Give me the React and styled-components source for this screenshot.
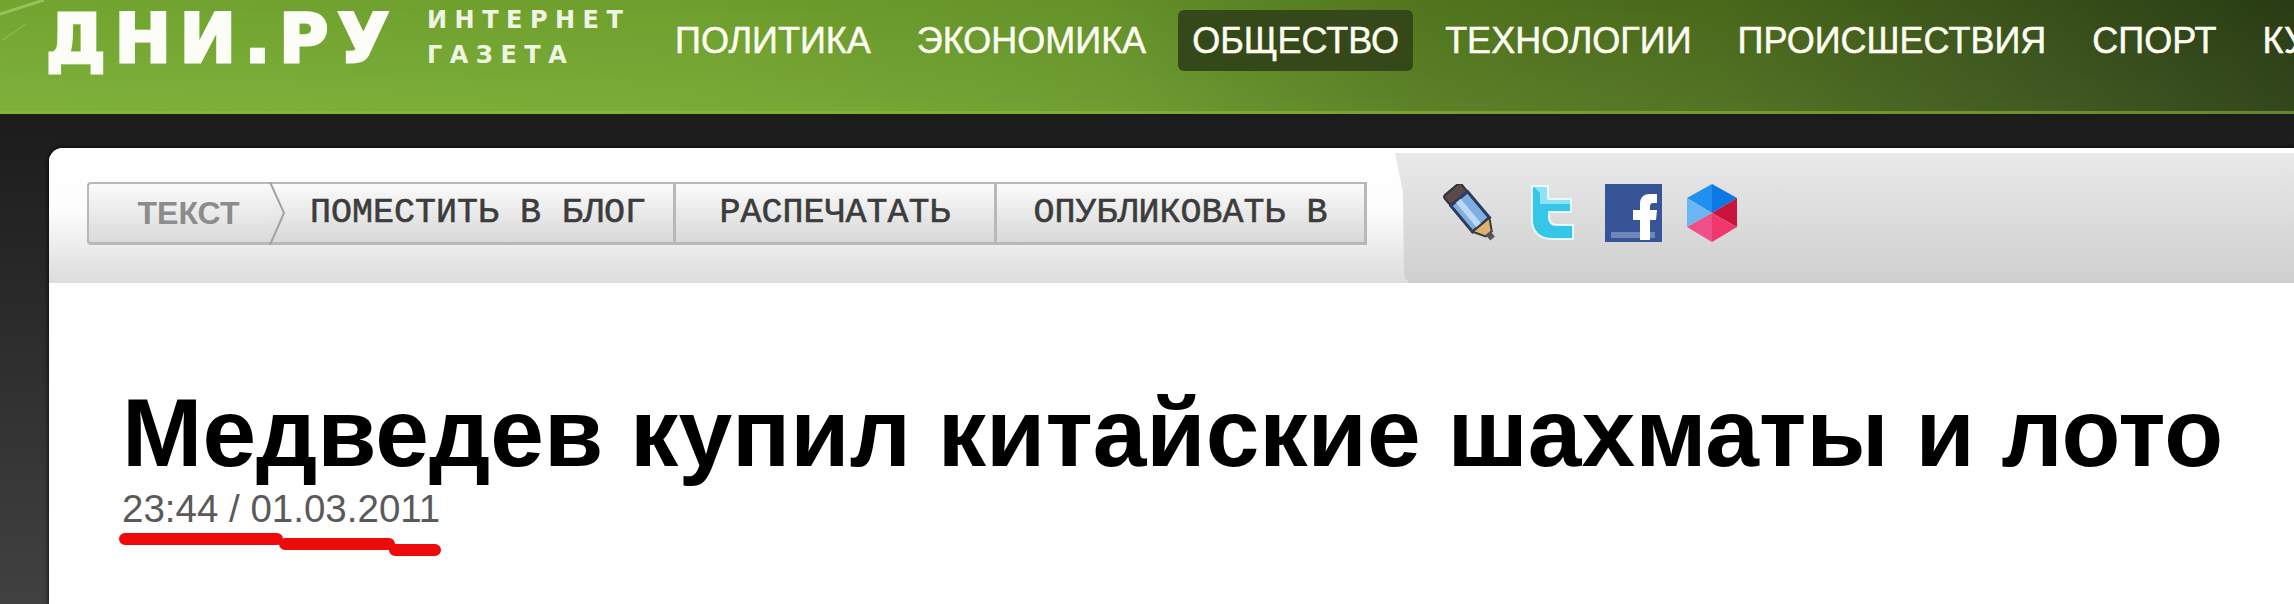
import styled, { createGlobalStyle } from "styled-components"

const GlobalStyle = createGlobalStyle`
    html, body {
        margin: 0;
        padding: 0;
        height: 100%;
        overflow: hidden;
    }
    #root {
        height: 100%;
    }
`

const navItems = ["ПОЛИТИКА", "ЭКОНОМИКА", "ОБЩЕСТВО", "ТЕХНОЛОГИИ", "ПРОИСШЕСТВИЯ", "СПОРТ", "КУЛЬТУРА"]

const actions = [
    { label: "ПОМЕСТИТЬ В БЛОГ", width: 406, indent: 13 },
    { label: "РАСПЕЧАТАТЬ", width: 321 },
    { label: "ОПУБЛИКОВАТЬ В", width: 370 },
]

export default function App () {
    return (
        <Page>
            <GlobalStyle />
            <Header>
                <Streak viewBox="0 0 60 40">
                    <path d="M0 14 L44 0" stroke="#a6cf6e" strokeWidth="3" fill="none" opacity="0.7" />
                    <path d="M0 42 L26 24" stroke="#93c155" strokeWidth="2" fill="none" opacity="0.5" />
                </Streak>
                <Logo>ДНИ.РУ</Logo>
                <Tagline>
                    <span>ИНТЕРНЕТ</span>
                    <span>ГАЗЕТА</span>
                </Tagline>
                <Nav>
                    {navItems.map(item => (
                        <NavItem key={item} $active={item === "ОБЩЕСТВО"}>{item}</NavItem>
                    ))}
                </Nav>
            </Header>
            <Main>
                <Card>
                    <Toolbar>
                        <ActionsPanel>
                            <TextTab>
                                ТЕКСТ
                                <Chevron viewBox="0 0 16 63" preserveAspectRatio="none">
                                    <path d="M1 0 L15 31 L1 63" fill="none" stroke="#a3a3a3" strokeWidth="2" />
                                </Chevron>
                            </TextTab>
                            {actions.map(action => (
                                <ActionButton key={action.label} $width={action.width} $indent={action.indent}>
                                    {action.label}
                                </ActionButton>
                            ))}
                        </ActionsPanel>
                        <SocialPanel>
                            <PencilIcon />
                            <TwitterIcon />
                            <FacebookIcon />
                            <HexIcon />
                        </SocialPanel>
                    </Toolbar>
                    <Article>
                        <Title>Медведев купил китайские шахматы и лото</Title>
                        <DateLine>23:44 / 01.03.2011</DateLine>
                        <Underline viewBox="0 0 322 26">
                            <path d="M6 7 H158 M166 12 H270 M276 18 H316" fill="none" stroke="#ee0a0a" strokeWidth="12" strokeLinecap="round" />
                        </Underline>
                    </Article>
                </Card>
            </Main>
        </Page>
    )
}

function PencilIcon () {
    return (
        <svg width="60" height="60" viewBox="0 0 60 60">
            <g transform="rotate(-40 30 30)">
                <rect x="19" y="-2" width="22" height="12" rx="3" fill="#5c4a4a" stroke="#333" strokeWidth="2" />
                <rect x="19" y="10" width="22" height="34" fill="#7faee0" stroke="#2b3c5c" strokeWidth="3" />
                <rect x="25" y="11" width="6" height="32" fill="#bcd8f4" />
                <path d="M19 44 H41 L34 56 H26 Z" fill="#e0b070" stroke="#3a3a3a" strokeWidth="2" />
                <rect x="27" y="55" width="6" height="7" fill="#555" />
            </g>
        </svg>
    )
}

function TwitterIcon () {
    return (
        <svg width="47" height="60" viewBox="0 0 47 60">
            <path d="M2 2 H18 V15 H41 V28 H19 V33 C19 39 22 41 27 41 H43 V55 H22 C9 55 2 47 2 36 Z" fill="#35c6ea" stroke="#e6fbff" strokeWidth="2" strokeLinejoin="round" />
            <path d="M4 3 H17 V16 H40 V20 H10 V9 Z" fill="#8fe2f5" />
        </svg>
    )
}

function FacebookIcon () {
    return (
        <svg width="57" height="58" viewBox="0 0 57 58">
            <rect width="57" height="58" fill="#375496" />
            <rect x="6" y="48" width="44" height="6" fill="#6f86b8" />
            <path d="M35 56 V36 H28 V26 H35 V20 C35 13 39 10 45 10 H52 V19 H48 C46 19 45 20 45 23 V26 H52 L51 36 H45 V56 Z" fill="#fff" />
        </svg>
    )
}

function HexIcon () {
    return (
        <HexSvg width="50" height="58" viewBox="0 0 50 58">
            <path d="M25 0 L25 29 L0 14 Z" fill="#1f8ff0" />
            <path d="M25 0 L50 14 L25 29 Z" fill="#0b78e6" />
            <path d="M0 14 L25 29 L0 43 Z" fill="#6bb6f2" />
            <path d="M50 14 L50 43 L25 29 Z" fill="#c8143c" />
            <path d="M0 43 L25 29 L25 58 Z" fill="#ee4f86" />
            <path d="M25 29 L50 43 L25 58 Z" fill="#f0386f" />
        </HexSvg>
    )
}

const Page = styled.div`
    display: flex;
    flex-direction: column;
    height: 100%;
    overflow: hidden;
    background: linear-gradient(180deg, #131313 0%, #1a1a1a 15%, #414141 100%);
`

const Header = styled.header`
    position: relative;
    box-sizing: border-box;
    display: flex;
    align-items: flex-start;
    flex: none;
    height: 114px;
    padding: 0 0 0 46px;
    border-bottom: 3px solid rgba(150, 200, 60, 0.55);
    overflow: hidden;
    background:
        linear-gradient(180deg, rgba(0, 0, 0, 0.06) 0%, rgba(255, 255, 255, 0.04) 100%),
        linear-gradient(90deg, #79ae33 0%, #75a830 30%, #6a9a2b 48%, #567c20 62%, #4d6e1c 75%, #39521a 90%, #2b3f14 100%);
`

const Streak = styled.svg`
    position: absolute;
    left: 0;
    top: 0;
    width: 60px;
    height: 40px;
`

const Logo = styled.div`
    flex: none;
    width: 365px;
    font-family: "DejaVu Sans", sans-serif;
    font-weight: 700;
    font-size: 67px;
    line-height: 78px;
    letter-spacing: 9px;
    -webkit-text-stroke: 3px #fbfdf6;
    color: #fbfdf6;
    white-space: nowrap;
`

const Tagline = styled.div`
    display: flex;
    flex-direction: column;
    gap: 11px;
    flex: none;
    width: 234px;
    margin: 8px 0 0 16px;
    font-family: "DejaVu Sans", sans-serif;
    font-weight: 700;
    font-size: 24px;
    line-height: 24px;
    letter-spacing: 7.5px;
    color: #eef5e0;
`

const Nav = styled.nav`
    display: flex;
    gap: 18px;
    margin: 10px 0 0 0;
    white-space: nowrap;
`

const NavItem = styled.a`
    box-sizing: border-box;
    height: 61px;
    padding: 0 14px;
    border-radius: 6px;
    font-family: "Liberation Sans", Arial, sans-serif;
    font-size: 36px;
    line-height: 61px;
    -webkit-text-stroke: 0.5px #fdfdf0;
    color: #fdfdf0;
    background: ${props => props.$active ? "#35481a" : "transparent"};
`

const Main = styled.main`
    display: flex;
    flex: 1;
    min-height: 0;
    padding: 34px 0 0 49px;
`

const Card = styled.div`
    flex: 1;
    min-width: 0;
    border-top-left-radius: 14px;
    background: #fff;
    box-shadow: 0 0 5px #000;
    overflow: hidden;
`

const Toolbar = styled.div`
    display: flex;
    height: 135px;
    background: linear-gradient(180deg, #fff 0%, #fdfdfd 45%, #dcdcdc 100%);
`

const ActionsPanel = styled.div`
    box-sizing: border-box;
    display: flex;
    flex: none;
    width: 1346px;
    height: 100px;
    padding: 34px 0 0 38px;
`

const TextTab = styled.div`
    position: relative;
    box-sizing: border-box;
    flex: none;
    width: 183px;
    height: 63px;
    padding-left: 18px;
    border: 2px solid #b8b8b8;
    border-right: none;
    border-bottom-width: 3px;
    border-radius: 4px 0 0 4px;
    background: linear-gradient(180deg, #fbfbfb 0%, #dadada 100%);
    font-family: "Liberation Sans", Arial, sans-serif;
    font-weight: 700;
    font-size: 32px;
    line-height: 58px;
    text-align: center;
    color: #8c8c8c;
`

const Chevron = styled.svg`
    position: absolute;
    z-index: 1;
    right: -15px;
    top: -2px;
    width: 16px;
    height: 63px;
`

const ActionButton = styled.div`
    box-sizing: border-box;
    flex: none;
    width: ${props => props.$width}px;
    height: 63px;
    padding-left: ${props => props.$indent || 0}px;
    border: 2px solid #b8b8b8;
    border-left: none;
    border-bottom-width: 3px;
    border-right-width: 3px;
    background: linear-gradient(180deg, #fbfbfb 0%, #d8d8d8 100%);
    font-family: "Liberation Mono", monospace;
    font-size: 35px;
    line-height: 58px;
    text-align: center;
    white-space: nowrap;
    -webkit-text-stroke: 0.6px #3c3c3c;
    color: #3c3c3c;
`

const SocialPanel = styled.div`
    box-sizing: border-box;
    display: flex;
    align-items: flex-start;
    gap: 28px;
    flex: 1;
    margin-top: 5px;
    padding: 31px 0 0 47px;
    clip-path: polygon(0 0, 100% 0, 100% 100%, 14px 100%, 9px 94%, 8px 30%);
    background: linear-gradient(180deg, #e9e9e9 0%, #cfcfcf 100%);
`

const HexSvg = styled.svg`
    margin-left: -3px;
`

const Article = styled.article`
    padding: 94px 0 0 73px;
`

const Title = styled.h1`
    margin: 0;
    font-family: "Liberation Sans", Arial, sans-serif;
    font-weight: 700;
    font-size: 96.5px;
    line-height: 112px;
    white-space: nowrap;
    color: #000;
`

const DateLine = styled.div`
    margin-top: 0;
    font-family: "Liberation Sans", Arial, sans-serif;
    font-size: 38.5px;
    line-height: 40px;
    color: #5a5a5a;
`

const Underline = styled.svg`
    display: block;
    width: 322px;
    height: 26px;
    margin: 3px 0 0 -3px;
`
